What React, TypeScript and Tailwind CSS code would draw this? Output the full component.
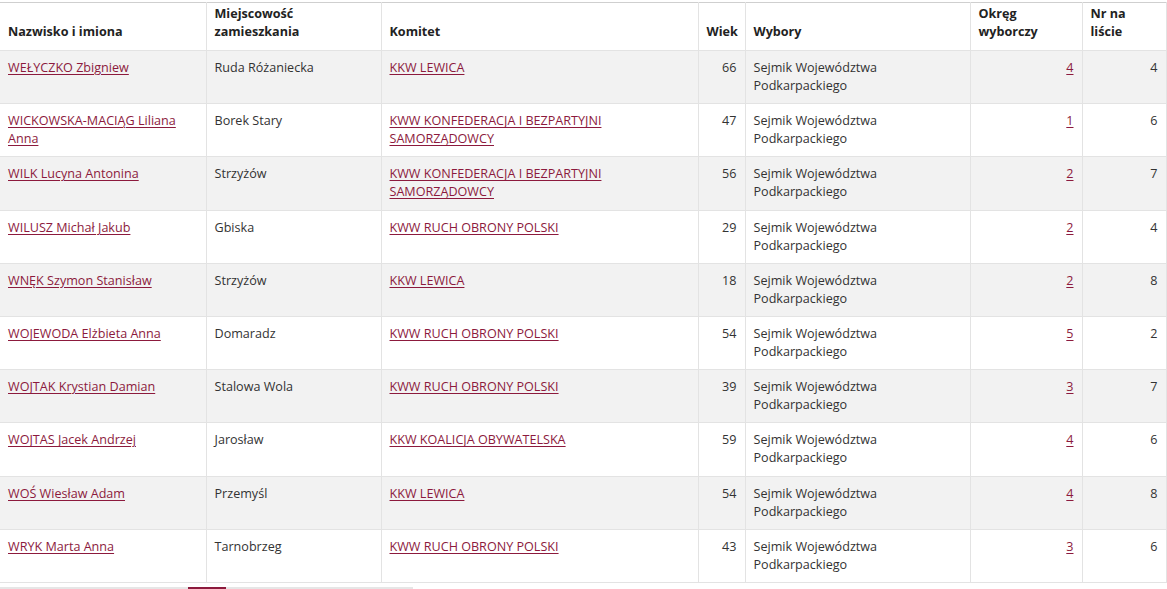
import React from "react"

type Row = {
  name: string
  city: string
  committee: string
  age: number
  district: number
  nr: number
}

const rows: Row[] = [
  { name: "WEŁYCZKO Zbigniew", city: "Ruda Różaniecka", committee: "KKW LEWICA", age: 66, district: 4, nr: 4 },
  { name: "WICKOWSKA-MACIĄG Liliana Anna", city: "Borek Stary", committee: "KWW KONFEDERACJA I BEZPARTYJNI SAMORZĄDOWCY", age: 47, district: 1, nr: 6 },
  { name: "WILK Lucyna Antonina", city: "Strzyżów", committee: "KWW KONFEDERACJA I BEZPARTYJNI SAMORZĄDOWCY", age: 56, district: 2, nr: 7 },
  { name: "WILUSZ Michał Jakub", city: "Gbiska", committee: "KWW RUCH OBRONY POLSKI", age: 29, district: 2, nr: 4 },
  { name: "WNĘK Szymon Stanisław", city: "Strzyżów", committee: "KKW LEWICA", age: 18, district: 2, nr: 8 },
  { name: "WOJEWODA Elżbieta Anna", city: "Domaradz", committee: "KWW RUCH OBRONY POLSKI", age: 54, district: 5, nr: 2 },
  { name: "WOJTAK Krystian Damian", city: "Stalowa Wola", committee: "KWW RUCH OBRONY POLSKI", age: 39, district: 3, nr: 7 },
  { name: "WOJTAS Jacek Andrzej", city: "Jarosław", committee: "KKW KOALICJA OBYWATELSKA", age: 59, district: 4, nr: 6 },
  { name: "WOŚ Wiesław Adam", city: "Przemyśl", committee: "KKW LEWICA", age: 54, district: 4, nr: 8 },
  { name: "WRYK Marta Anna", city: "Tarnobrzeg", committee: "KWW RUCH OBRONY POLSKI", age: 43, district: 3, nr: 6 },
]

const th = "border-x border-[#e3e3e3] px-2 pt-[2px] pb-[9px] align-bottom text-left font-bold text-[#222] leading-[18px]"
const td = "border-x border-[#e3e3e3] px-2 py-2 align-top"
const link = "text-[#8c1a3d] underline underline-offset-2 decoration-1"

const App = () => {
  return (
    <div
      className="bg-white text-[12.6px] leading-[18.1px] text-[#333]"
      style={{ fontFamily: '"Open Sans", "Noto Sans", sans-serif' }}
    >
      <table className="mt-[2px] w-[1166px] table-fixed border-collapse">
        <colgroup>
          <col className="w-[206px]" />
          <col className="w-[175px]" />
          <col className="w-[317px]" />
          <col className="w-[47px]" />
          <col className="w-[225px]" />
          <col className="w-[112px]" />
          <col className="w-[84px]" />
        </colgroup>
        <thead>
          <tr className="border-t border-b border-t-[#cfcfcf] border-b-[#e3e3e3]">
            <th className={th + " border-l-0"}>Nazwisko i imiona</th>
            <th className={th}>Miejscowość zamieszkania</th>
            <th className={th}>Komitet</th>
            <th className={th + " text-right"}>Wiek</th>
            <th className={th}>Wybory</th>
            <th className={th}>Okręg wyborczy</th>
            <th className={th}>Nr na liście</th>
          </tr>
        </thead>
        <tbody>
          {rows.map((r, i) => (
            <tr
              key={r.name}
              className={
                "border-b border-[#e3e3e3] " + (i % 2 === 0 ? "bg-[#f2f2f2]" : "bg-white")
              }
            >
              <td className={td + " border-l-0"}>
                <a href="#" className={link}>{r.name}</a>
              </td>
              <td className={td}>{r.city}</td>
              <td className={td}>
                <a href="#" className={link}>{r.committee}</a>
              </td>
              <td className={td + " text-right"}>{r.age}</td>
              <td className={td}>Sejmik Województwa Podkarpackiego</td>
              <td className={td + " text-right"}>
                <a href="#" className={link}>{r.district}</a>
              </td>
              <td className={td + " text-right"}>{r.nr}</td>
            </tr>
          ))}
        </tbody>
      </table>
      <div className="mt-[4px] flex h-[2px] w-[413px] bg-[#e6e6e6]">
        <div className="ml-[188px] h-full w-[38px] bg-[#8c1a3d]" />
      </div>
    </div>
  )
}

export default App
